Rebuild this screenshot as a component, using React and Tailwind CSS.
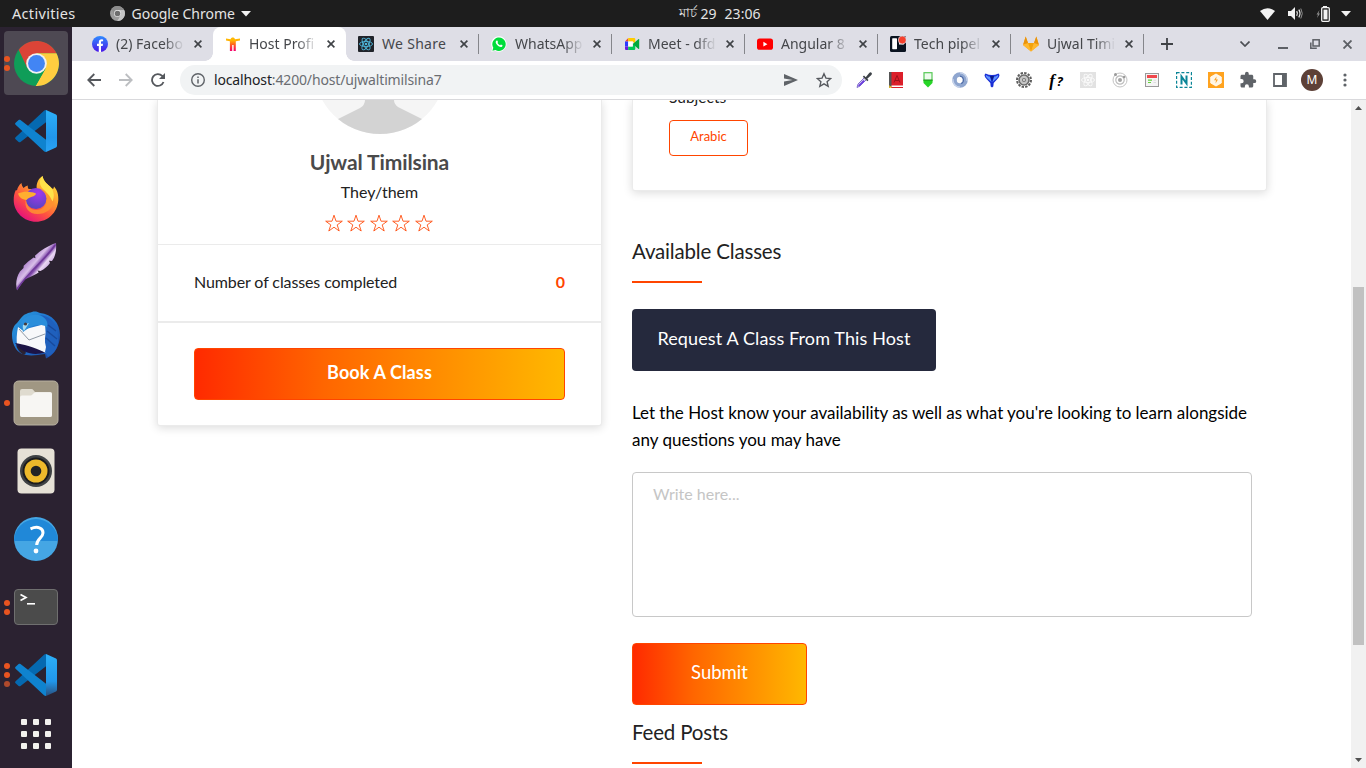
import React from "react";

const UI = "font-['Noto_Sans',sans-serif]";

/* ---------- dock icons ---------- */
function ChromeLogo({ className, mono }) {
  const c = mono
    ? ["#8d8d8d", "#c4c4c4", "#9c9c9c", "#efefef", "#6e6e6e"]
    : ["#db4437", "#ffcd40", "#0f9d58", "#f1f1f1", "#4285f4"];
  return (
    <svg viewBox="0 0 48 48" className={className}>
      <circle cx="24" cy="24" r="24" fill={c[2]} />
      <path d="M24 24 5 9.300A24 24 0 0 1 45.300 13H24z" fill={c[0]} />
      <path d="M24 13H45.300A24 24 0 0 1 23 48L33.500 29.500z" fill={c[1]} />
      <path d="M5 9.300 14.500 29.500 24 13z" fill={c[0]} />
      <path d="M23 48 33.500 29.500 24 24 14 28z" fill={c[2]} />
      <circle cx="24" cy="24" r="11" fill={c[3]} />
      <circle cx="24" cy="24" r="9" fill={c[4]} />
    </svg>
  );
}

function VSCode({ faded }) {
  return (
    <svg viewBox="0 0 42 42" className="h-[42px] w-[42px]">
      <defs>
        <linearGradient id={faded ? "vsb" : "vsa"} x1="0" y1="0" x2="0" y2="1">
          <stop offset="0" stopColor="#2cb0f8" />
          <stop offset="0.65" stopColor="#2196ea" />
          <stop offset="1" stopColor={faded ? "#2a4f7c" : "#2aa3f3"} />
        </linearGradient>
      </defs>
      <path d="M.6 27.2a1.4 1.4 0 0 0 0 2l3 2.7c.6.5 1.3.5 1.9 0L31 12.2V0c-.9 0-1.500.3-2 .8z" fill="#0569b0" />
      <path d="M.6 14.8a1.4 1.4 0 0 1 0-2l3-2.7c.6-.5 1.3-.5 1.9 0L31 29.8V42c-.9 0-1.500-.3-2-.8z" fill="#0f83cf" />
      <path d="M31 0 41 4.600Q42 5.100 42 6.300V35.700Q42 36.900 41 37.400L31 42z" fill={faded ? "url(#vsb)" : "url(#vsa)"} />
    </svg>
  );
}

function Firefox() {
  return (
    <svg viewBox="0 0 46 48" className="h-[48px] w-[46px]">
      <defs>
        <linearGradient id="ff1" x1="0.85" y1="0.1" x2="0.25" y2="0.95">
          <stop offset="0" stopColor="#ffdc3a" />
          <stop offset="0.35" stopColor="#ff9a2e" />
          <stop offset="0.65" stopColor="#ff5340" />
          <stop offset="1" stopColor="#e6127a" />
        </linearGradient>
        <radialGradient id="ff2" cx="0.6" cy="0.25" r="0.75">
          <stop offset="0" stopColor="#a337ee" />
          <stop offset="1" stopColor="#5a44c0" />
        </radialGradient>
      </defs>
      <path d="M8.500 8c.2 2 .8 3.500 2 5 1.200-1.200 2.500-2 4.300-2.600-.2 1.600.1 2.800 1 3.600h8C23 9 25 4 29.500 1c1 5 3.500 7 7.500 10.500 2 1.800 3 3 3.500 2l.5-2C44.500 15 45.500 20 45.300 25 44.500 37.500 35 46.800 23 46.800S.7 37 .7 25c0-4 .6-7 2.200-10L4 15.500C4.500 12.500 6 10 8.500 8z" fill="url(#ff1)" />
      <circle cx="23" cy="23.500" r="10.500" fill="url(#ff2)" />
      <path d="M13 23c0 8 4.500 12 10.500 12 6 0 10.500-4.500 10.500-10.500 0-4-2.500-7.500-6-9.500l4.500.5-3-3c8.500 1.500 12.500 8 11 15.500-1.300 6-7.500 11-16 11S10.500 33 13 23z" fill="#ff9230" fillOpacity="0.850" />
      <path d="M5 18.500c4-1.800 8-2.200 12-1.500 3 .4 6 .8 6 2-1 2-3.500 2.500-6 3.500-1.500.6-2.500 1.500-3.500 2.500C9 24.500 6 22 5 18.500z" fill="#ffae30" />
      <path d="M29.500 1c1 5 3.500 7 7.500 10.500 4 3.500 5 10 2.500 15-2.500-6-6-9-9.500-12.500-4-4-4-9-.5-13z" fill="#ffe34a" />
    </svg>
  );
}

function Feather() {
  return (
    <svg viewBox="0 0 42 48" className="h-[48px] w-[42px]">
      <defs>
        <linearGradient id="fe" x1="0.2" y1="0.2" x2="0.8" y2="0.8">
          <stop offset="0" stopColor="#8245b0" />
          <stop offset="0.4" stopColor="#d9bfe9" />
          <stop offset="0.52" stopColor="#7d46a8" />
          <stop offset="0.62" stopColor="#ead9f3" />
          <stop offset="1" stopColor="#9a5fc4" />
        </linearGradient>
      </defs>
      <path d="M41 0c.6 7-.3 13-4 18l-3-.2 1 2.200c-2.500 3.500-5.500 6-9.500 8l-3-.6 1.200 2c-4 2.600-8.500 4.400-14.500 7.400L2 47.500C.5 42 1 34 5 28.500L8.500 25l.2-2.300C12 19.500 15 17 18.500 14.500l2 .7-.5-2.500C25 8 33 2.500 41 0z" fill="url(#fe)" />
      <path d="M40 2C33 14 15 27 2 46" stroke="#6f3899" strokeWidth="1.500" fill="none" />
    </svg>
  );
}

function Thunderbird() {
  return (
    <svg viewBox="0 0 48 48" className="h-[48px] w-[48px]">
      <defs>
        <linearGradient id="tb" x1="0" y1="0" x2="1" y2="1">
          <stop offset="0" stopColor="#2aa0e0" />
          <stop offset="0.5" stopColor="#1f6fcb" />
          <stop offset="1" stopColor="#1c3f96" />
        </linearGradient>
      </defs>
      <path d="M20 1c3-1 6 0 8 1 12 1 20 10 20 22 0 11-6 20-14 23.500L33 43C20 45 10 46 4 38 1 33 0 29 0 24c0-5 2-10 5-12l4-5C12 3 16 2 20 1z" fill="url(#tb)" />
      <path d="M4 34q8 3 10 8l-2 2Q6 41 4 34z" fill="#2b2231" />
      <path d="M6 16 10 19 33 13 35 42Q20 38 5 34Q4 26 6 16z" fill="#f7f8fa" />
      <path d="M7 18l10 11 16-6" stroke="#8f98a3" strokeWidth="1" fill="none" />
      <path d="M3 32c8 1 18 4 30 9.500-10 3-22 2-30-9.500z" fill="#1c1446" />
      <path d="M9 11c4-6 13-9 20-6 5 2 7 6 6 11-5-3-12-2-17 0l-7 5c-1-3-2-7-2-10z" fill="#2a8edb" />
      <path d="M11 14l6-2-5 8c-1-2-1.500-3-1-6z" fill="#a5daf0" />
      <circle cx="13.500" cy="13" r="1.600" fill="#473a3a" />
      <path d="M28 4c8 4 9 9 7 14-2 6-3 12-1 18l-1 5 3 5c7-4 11-11 10-18l-1-11C42 10 37 5 28 4z" fill="#1f60bd" />
      <path d="M36 14l8 6M35 20l10 8M34 27l9 8" stroke="#184a9c" strokeWidth="1.500" />
    </svg>
  );
}

function Files() {
  return (
    <svg viewBox="0 0 46 46" className="h-[46px] w-[46px]">
      <rect x="1" y="1" width="44" height="44" rx="4.500" fill="#a09783" stroke="#b9b2a2" />
      <path d="M7 11q0-2 2-2h9.500q1.200 0 2 1.200L22 12H37q2 0 2 2v21q0 2-2 2H9q-2 0-2-2z" fill="#dfdbcf" />
      <path d="M7 17.500q0-2 2-2h8.500q1.200 0 2.200-1.200l1.300-1.300q.8-.8 2-.8H37q2 0 2 2V35q0 2-2 2H9q-2 0-2-2z" fill="#f7f6f3" />
    </svg>
  );
}

function Speaker() {
  return (
    <svg viewBox="0 0 38 46" className="h-[46px] w-[38px]">
      <rect x="0.500" y="0.500" width="37" height="45" rx="4" fill="#e6e1d6" />
      <circle cx="19" cy="23" r="16" fill="#3f4244" />
      <circle cx="19" cy="23" r="13.500" fill="#1b1c1e" />
      <circle cx="19" cy="23" r="11.500" fill="#edb92b" />
      <circle cx="19" cy="23" r="5.300" fill="#222325" />
    </svg>
  );
}

function Help() {
  return (
    <svg viewBox="0 0 44 44" className="h-[44px] w-[44px]">
      <circle cx="22" cy="22" r="22" fill="#45a6e4" />
      <path d="M0 24a22 22 0 0 1 44 0z" fill="#2088d8" />
      <path d="M16.500 11.800c7-3 12.700-1 12.500 4.200-.2 5-6.300 5.500-6.300 12" stroke="#fff" strokeWidth="3" fill="none" />
      <circle cx="22" cy="34" r="2.400" fill="#fff" />
    </svg>
  );
}

function Terminal() {
  return (
    <svg viewBox="0 0 44 36" className="h-[36px] w-[44px]">
      <rect x="0.500" y="0.500" width="43" height="35" rx="3.500" fill="#4b4b4b" stroke="#6f6f6f" />
      <path d="M6.500 5.500 12 8.500 6.500 11.500" stroke="#fff" strokeWidth="1.700" fill="none" />
      <path d="M13 14.800h8" stroke="#fff" strokeWidth="1.600" />
    </svg>
  );
}

const dock = [
  { icon: <ChromeLogo className="h-[45px] w-[45px]" />, dots: 2, active: true },
  { icon: <VSCode />, dots: 0 },
  { icon: <Firefox />, dots: 0 },
  { icon: <Feather />, dots: 0 },
  { icon: <Thunderbird />, dots: 0 },
  { icon: <Files />, dots: 1 },
  { icon: <Speaker />, dots: 0 },
  { icon: <Help />, dots: 0 },
  { icon: <Terminal />, dots: 2 },
  { icon: <VSCode faded />, dots: 3 },
];

function Dock() {
  return (
    <aside className="flex w-[72px] shrink-0 flex-col items-center gap-1 overflow-hidden bg-[#2b2231] pt-1">
      {dock.map((d, i) => (
        <div
          key={i}
          className={
            "relative flex h-16 w-16 shrink-0 items-center justify-center rounded-[4px] " +
            (d.active ? "bg-[#4e4953]" : "")
          }
        >
          {d.icon}
          <div className="absolute inset-y-0 left-0 flex flex-col items-center justify-center gap-[3px]">
            {Array.from({ length: d.dots }).map((_, k) => (
              <span key={k} className={"h-[6px] w-[6px] rounded-full " + (k === 2 ? "bg-[#b04a2c]" : "bg-[#e95420]")} />
            ))}
          </div>
        </div>
      ))}
      <div className="mt-2 grid shrink-0 grid-cols-3 gap-[6px]">
        {Array.from({ length: 9 }).map((_, k) => (
          <span key={k} className="h-[6px] w-[6px] rounded-[1px] bg-[#f2f1ee]" />
        ))}
      </div>
    </aside>
  );
}

/* ---------- system bar ---------- */
function TopBar() {
  return (
    <header className={"grid h-[27px] shrink-0 grid-cols-3 items-center bg-[#1d1d1d] text-[14px] leading-none text-[#e4e4e4] " + UI}>
      <div className="flex items-center pl-3">
        <span className="text-[14.500px] tracking-[0.32px]">Activities</span>
        <ChromeLogo mono className="ml-[34px] h-[15px] w-[15px]" />
        <span className="ml-[7px]">Google Chrome</span>
        <svg viewBox="0 0 10 6" className="ml-[6px] h-[6px] w-[10px]"><path d="M0 0h10L5 5.500z" fill="#f2f2f2" /></svg>
      </div>
      <div className="flex items-center justify-center gap-1 pl-[73px]">
        <span className="text-[12.500px]">মার্চ</span>
        <span>29</span>
        <span className="ml-[4px]">23:06</span>
      </div>
      <div className="flex items-center justify-end pr-[15px]">
        <svg viewBox="0 0 15 12" className="h-[12px] w-[15px]"><path d="M0 3Q7.500-2.600 15 3L7.500 12z" fill="#f2f2f2" /></svg>
        <svg viewBox="0 0 15 13" className="ml-[13px] h-[13px] w-[15px]">
          <path d="M0 4h3l4-4v13L3 9H0z" fill="#f2f2f2" />
          <path d="M8.700 4.200q1.500 2.300 0 4.600M10.800 2.700q2.500 3.800 0 7.600" stroke="#f2f2f2" fill="none" strokeWidth="1.200" />
          <path d="M12.800 1.500q3 5 0 10" stroke="#8f8f8f" fill="none" />
        </svg>
        <svg viewBox="0 0 14 16" className="ml-[13px] h-[16px] w-[14px]">
          <path d="M3.500 4 .5 8.500H2L1 12 4 7.500H2.500z" fill="#8e8e8e" />
          <path d="M7 0h4v2H7z" fill="#f2f2f2" />
          <rect x="5.700" y="1.700" width="7.600" height="13.600" rx="1" fill="none" stroke="#f2f2f2" strokeWidth="1.300" />
          <rect x="7.500" y="3.600" width="4" height="9.800" fill="#f2f2f2" />
        </svg>
        <svg viewBox="0 0 10 6" className="ml-[11px] h-[6px] w-[10px]"><path d="M0 0h10L5 5.500z" fill="#f2f2f2" /></svg>
      </div>
    </header>
  );
}

/* ---------- tab favicons ---------- */
const fav = "h-4 w-4 shrink-0";
const Facebook = () => (
  <svg viewBox="0 0 16 16" className={fav}>
    <defs><linearGradient id="fb" x1="0" y1="0" x2="0" y2="1"><stop offset="0" stopColor="#2f8cff" /><stop offset="1" stopColor="#4a16e8" /></linearGradient></defs>
    <circle cx="8" cy="8" r="8" fill="url(#fb)" />
    <path d="M6.800 16V10H5V7.800h1.800V6.300C6.800 4.300 7.900 3.300 9.700 3.300q.8 0 1.400.1v1.900H10c-.8 0-1 .5-1 1.100v1.400h2L10.700 10H9v6z" fill="#fff" />
  </svg>
);
const HostMark = () => (
  <svg viewBox="0 0 16 16" className={fav}>
    <defs><linearGradient id="hm" x1="0" y1="0" x2="0" y2="1"><stop offset="0.2" stopColor="#ffb703" /><stop offset="0.55" stopColor="#ff5a1f" /><stop offset="1" stopColor="#f5006e" /></linearGradient></defs>
    <path d="M1 2.600l4.600.6C6 1 9.500 1 10 3.200l5-.6v2l-4.200.6V15H8.600V9H7.200v6H4.900V5.200L1 4.600z" fill="url(#hm)" />
  </svg>
);
const ReactMark = ({ bg = "#20232a", fg = "#4fb8dc", r = 1 }) => (
  <svg viewBox="0 0 16 16" className={fav}>
    <rect width="16" height="16" rx={r} fill={bg} />
    <g fill="none" stroke={fg} strokeWidth="0.900">
      <ellipse cx="8" cy="8" rx="6.500" ry="2.600" />
      <ellipse cx="8" cy="8" rx="6.500" ry="2.600" transform="rotate(60 8 8)" />
      <ellipse cx="8" cy="8" rx="6.500" ry="2.600" transform="rotate(120 8 8)" />
    </g>
    <circle cx="8" cy="8" r="1.300" fill={fg} />
  </svg>
);
const Whatsapp = () => (
  <svg viewBox="0 0 16 16" className={fav}>
    <path d="M.3 15.800 1.300 12A7.700 7.700 0 1 1 4.100 14.700z" fill="#fff" />
    <path d="M1.400 14.700 2.300 11.700A6.700 6.700 0 1 1 4.500 13.900z" fill="#00dd3b" />
    <path d="M5.800 4.500c.4-.1.600.1.700.4l.5 1.200c.1.300-.5.800-.5 1 .5 1 1.400 1.700 2.400 2.200.3 0 .8-.9 1.100-.8l1.400.7c.3.200.1 1.300-.9 1.700C8.500 11.800 4.800 8.400 4.700 6.300c0-.9.600-1.700 1.100-1.800z" fill="#fff" />
  </svg>
);
const Meet = () => (
  <svg viewBox="0 0 16 16" className={fav}>
    <path d="M1 5.500 4.200 2v3.500z" fill="#ea4335" />
    <path d="M1 5.500h3.200v5H1z" fill="#2a3bff" />
    <path d="M1 10.500h3.200V14H2q-1 0-1-1z" fill="#6a1be0" />
    <path d="M4.200 2H10q1.300 0 1.300 1.300V8L8.800 5.500H4.200z" fill="#ffcc00" />
    <path d="M4.200 10.500h4.600V8l2.500 0v4.700Q11.300 14 10 14H4.200z" fill="#00c853" />
    <path d="M4.200 5.500h4.600v5H4.200z" fill="#fff" />
    <path d="M8.800 8l5.500-4.800q.9-.5.900.4v8.800q0 1-.9.400z" fill="#00a83c" />
  </svg>
);
const Youtube = () => (
  <svg viewBox="0 0 16 16" className={fav}>
    <rect y="2.500" width="16" height="11.300" rx="2.600" fill="#f00" />
    <path d="M6.400 5.800v4.700l4-2.350z" fill="#fff" />
  </svg>
);
const Pipeline = () => (
  <svg viewBox="0 0 16 16" className={fav}>
    <rect width="16" height="16" rx="1.500" fill="#0a1320" />
    <rect x="2.200" y="2.200" width="4.800" height="11" rx="0.600" fill="#fff" />
    <path d="M9 2h5v6.500H9z" fill="#fff" />
    <circle cx="12.300" cy="4" r="4" fill="#f5402c" stroke="#dedee6" strokeWidth="0.700" />
  </svg>
);
const Gitlab = () => (
  <svg viewBox="0 0 16 16" className={fav}>
    <path d="M2.700.5 5 7h6L13.300.5 16 9 8 15.500 0 9z" fill="#fca326" />
    <path d="M5 7h6l-3 8.500z" fill="#f2a30c" />
    <path d="M5 7 0 9l8 6.500zM11 7l5 2-8 6.500z" fill="#ffb92e" />
    <path d="M2.700.5 5 7 .3 8.300zM13.300.5 11 7l4.700 1.300z" fill="#e8930a" />
  </svg>
);

const tabs = [
  { icon: <Facebook />, title: "(2) Facebo" },
  { icon: <HostMark />, title: "Host Profi", active: true },
  { icon: <ReactMark />, title: "We Share", sep: true },
  { icon: <Whatsapp />, title: "WhatsApp", sep: true },
  { icon: <Meet />, title: "Meet - dfd", sep: true },
  { icon: <Youtube />, title: "Angular 8", sep: true },
  { icon: <Pipeline />, title: "Tech pipel", sep: true },
  { icon: <Gitlab />, title: "Ujwal Timi", sep: true },
];

function TabStrip() {
  return (
    <div className={"flex h-[34px] shrink-0 bg-[#dedee6] pl-2 " + UI}>
      {tabs.map((t, i) => (
        <div
          key={i}
          className={
            "relative flex h-[34px] w-[133px] shrink-0 items-center pl-3 " +
            (t.active ? "rounded-t-[8px] bg-white" : "")
          }
        >
          {t.active && (
            <>
              <span className="absolute bottom-0 left-[-8px] h-2 w-2 bg-[radial-gradient(circle_at_0_0,#dedee6_7.5px,#ffffff_8px)]" />
              <span className="absolute right-[-8px] bottom-0 h-2 w-2 bg-[radial-gradient(circle_at_100%_0,#dedee6_7.5px,#ffffff_8px)]" />
            </>
          )}
          {t.icon}
          <span
            className={
              "ml-2 w-[70px] whitespace-nowrap text-[14px] leading-[20px] text-[#45474b] " +
              (t.title === "We Share" ? "tracking-[0.3px]" : "[mask-image:linear-gradient(to_right,black_68%,transparent_98%)]")
            }
          >
            {t.title}
          </span>
          <svg viewBox="0 0 8 8" className="ml-2 h-2 w-2 shrink-0"><path d="M.6.6l6.800 6.800M7.400.6.600 7.400" stroke="#3f4246" strokeWidth="1.600" /></svg>
          {t.sep && <span className="absolute top-[7px] right-0 h-5 w-px bg-[#85868b]" />}
        </div>
      ))}
      <div className="flex flex-1 items-center pl-[17px]">
        <svg viewBox="0 0 12 12" className="h-3 w-3"><path d="M6 0v12M0 6h12" stroke="#3f4246" strokeWidth="1.800" /></svg>
        <svg viewBox="0 0 10 6" className="ml-[67px] h-[6px] w-[10px]"><path d="M.5.500 5 5 9.500.5" stroke="#4c4f54" strokeWidth="1.700" fill="none" /></svg>
        <svg viewBox="0 0 10 10" className="ml-[28px] h-[10px] w-[10px]"><path d="M0 9h10" stroke="#5d6066" strokeWidth="2" /></svg>
        <svg viewBox="0 0 10 10" className="ml-[22px] h-[10px] w-[10px]">
          <rect x="3" y="0.800" width="6.200" height="6.200" fill="none" stroke="#5d6066" strokeWidth="1.500" />
          <path d="M.8 3.500v5.700h6" stroke="#5d6066" strokeWidth="1.500" fill="none" />
        </svg>
        <svg viewBox="0 0 9 9" className="ml-[23px] h-[9px] w-[9px]"><path d="M.5.500l8 8M8.500.5l-8 8" stroke="#5d6066" strokeWidth="1.900" /></svg>
      </div>
    </div>
  );
}

/* ---------- toolbar ---------- */
const ext = [
  <svg viewBox="0 0 16 16" className="h-4 w-4">
    <path d="M1 15.500 2 12 8.500 5.500l2 2L4 14z" fill="#d8d3ea" stroke="#6a50c8" strokeWidth="0.800" />
    <path d="M2 13.500 7.500 8l1.200 1.200L3.500 14.200z" fill="#6a3be0" />
    <path d="M8 3.500 12.500 8l-1.200 1.200L6.800 4.700zM9.700 5.200 13 1.200q1.500-1.600 2.500-.4t-.4 2.500L11.300 6.800z" fill="#3c4147" />
  </svg>,
  <svg viewBox="0 0 16 16" className="h-4 w-4">
    <rect x="1" width="14" height="16" fill="#dc1f2a" /><rect x="1" width="2.500" height="16" fill="#555" />
    <path d="M3.500 13.500H15V15H3.500z" fill="#fff" /><path d="M6 10.500 9 3.500l3 7M7 8.500h4" stroke="#9d121b" fill="none" />
    <path d="M1.500 13 2.500 14.500 4 14.700 3 16H1.200z" fill="#ffd21f" />
  </svg>,
  <svg viewBox="0 0 16 16" className="h-4 w-4">
    <rect x="4" y="0.700" width="8" height="8" fill="#effbef" stroke="#57c957" strokeWidth="1.200" />
    <path d="M3.500 8h9v3L8 15.500 3.500 11z" fill="#27d527" /><path d="M3.500 8h9" stroke="#178a17" />
  </svg>,
  <svg viewBox="0 0 16 16" className="h-4 w-4">
    <circle cx="8" cy="8" r="5.500" fill="none" stroke="#8fa6cf" strokeWidth="4.600" />
    <path d="M8 .8A7.200 7.200 0 0 1 15 9M8 15.200A7.200 7.200 0 0 1 1 7" stroke="#c9d5ec" strokeWidth="1.300" fill="none" />
    <path d="M8 4.200A3.800 3.800 0 0 1 9 11.500" stroke="#4e6ba8" strokeWidth="1.200" fill="none" />
  </svg>,
  <svg viewBox="0 0 16 16" className="h-4 w-4">
    <path d="M1.500 1.500Q8 4.500 14.500 1.500 17 4 13 7.500L9.700 11 9.300 14.500 8 15.500 6.700 14.500 6.300 11 3 7.500Q-1 4 1.500 1.500z" fill="#1a2fd6" />
    <path d="M2 3Q4 4.800 6 4.800L7.500 10 3 6Q1 4 2 3zM14 3q-2 1.800-4 1.800L8.500 10 13 6q2-2 1-3z" fill="#5f94ff" />
    <path d="M6 4h4L8 9z" fill="#0b1a86" />
  </svg>,
  <svg viewBox="0 0 16 16" className="h-4 w-4">
    <circle cx="8" cy="8" r="7" fill="none" stroke="#5c5c5c" strokeWidth="2" strokeDasharray="2.400 1.260" />
    <circle cx="8" cy="8" r="5" fill="#c5c5c5" stroke="#6b6b6b" strokeWidth="1.600" /><circle cx="8" cy="8" r="2" fill="#777" />
    <circle cx="8" cy="8" r="0.900" fill="#eee" />
  </svg>,
  <span className="flex items-baseline gap-[2px] font-['Liberation_Serif',serif] text-[17px] leading-none font-bold text-black"><i>f</i><span className="font-['Noto_Sans',sans-serif] text-[13px] italic">?</span></span>,
  <ReactMark bg="#e2e2e2" fg="#fafafa" r={0} />,
  <svg viewBox="0 0 16 16" className="h-4 w-4">
    <circle cx="8" cy="8" r="7" fill="none" stroke="#c4c4c4" strokeWidth="1" /><circle cx="8" cy="8" r="4.200" fill="none" stroke="#bcbcbc" strokeWidth="1.200" />
    <circle cx="8" cy="8" r="2" fill="#a5a5a5" /><circle cx="3.500" cy="2.500" r="1.500" fill="#9a9a9a" /><circle cx="12.200" cy="5" r="1.300" fill="#9a9a9a" />
  </svg>,
  <svg viewBox="0 0 16 16" className="h-4 w-4">
    <rect x="1.500" y="1.500" width="13" height="13" fill="#f4f4f4" stroke="#9a9a9a" /><rect x="3" y="3" width="10" height="3" fill="#f0484c" />
    <path d="M4 8.200h4M4 10.500h3" stroke="#63d13c" strokeWidth="1.200" /><path d="M9.500 8.200H12M9.500 10.500H12" stroke="#ddd" />
  </svg>,
  <svg viewBox="0 0 16 16" className="h-4 w-4">
    <rect x="0.600" y="0.600" width="14.800" height="14.800" fill="none" stroke="#0a8597" strokeWidth="1.200" strokeDasharray="3 1.800" />
    <path d="M5.500 12.500V4.500l5 7V3.500" stroke="#0a8597" strokeWidth="2" fill="none" />
  </svg>,
  <svg viewBox="0 0 16 16" className="h-4 w-4">
    <rect width="16" height="16" fill="#ffa31f" /><path d="M8 2l5.300 3v6L8 14l-5.300-3V5z" fill="#fff6e6" stroke="#fff" strokeWidth="0.800" />
    <path d="M8.500 4.500 6 8.200h2L7.500 11.500 10 7.500H8.200z" fill="#f8a12a" />
  </svg>,
  <svg viewBox="0 0 24 24" className="h-[18px] w-[18px]">
    <path d="M20.500 11H19V7c0-1.100-.9-2-2-2h-4V3.500a2.500 2.500 0 0 0-5 0V5H4c-1.100 0-2 .9-2 2v3.800h1.500a2.700 2.700 0 0 1 0 5.400H2V20c0 1.100.9 2 2 2h3.800v-1.500a2.700 2.700 0 0 1 5.400 0V22H17c1.100 0 2-.9 2-2v-4h1.500a2.500 2.500 0 0 0 0-5z" fill="#5f6368" />
  </svg>,
  <svg viewBox="0 0 14 14" className="h-[14px] w-[14px]"><path d="M1 1h12v12H1z" fill="#fff" stroke="#5f6368" strokeWidth="1.800" /><path d="M9 1h4v12H9z" fill="#5f6368" /></svg>,
  <span className="flex h-[22px] w-[22px] items-center justify-center rounded-full bg-[#5d4037] text-[12px] leading-none text-white">M</span>,
  <svg viewBox="0 0 4 14" className="ml-[1px] h-[14px] w-[4px]"><g fill="#5f6368"><circle cx="2" cy="2" r="1.600" /><circle cx="2" cy="7" r="1.600" /><circle cx="2" cy="12" r="1.600" /></g></svg>,
];

function Toolbar() {
  return (
    <div className={"flex h-[39px] shrink-0 items-center border-b border-[#d9d9dc] bg-white " + UI}>
      <div className="flex w-[108px] items-center">
        <svg viewBox="0 0 14 14" className="ml-[15px] h-[14px] w-[14px]"><path d="M14 7H1.500M7.300 1 1.300 7l6 6" stroke="#55585d" strokeWidth="1.800" fill="none" /></svg>
        <svg viewBox="0 0 14 14" className="ml-[18px] h-[14px] w-[14px]"><path d="M0 7h12.500M6.700 1l6 6-6 6" stroke="#bcbec1" strokeWidth="1.800" fill="none" /></svg>
        <svg viewBox="0 0 14 14" className="ml-[18px] h-[14px] w-[14px]"><path d="M12.500 9A5.900 5.900 0 1 1 11.200 2.900L12.500 4.500" stroke="#55585d" strokeWidth="1.800" fill="none" /><path d="M14 0v6H8z" fill="#55585d" /></svg>
      </div>
      <div className="flex h-[30px] w-[662px] shrink-0 items-center rounded-full bg-[#f1f3f4] pl-[11px]">
        <svg viewBox="0 0 14 14" className="h-[14px] w-[14px]"><circle cx="7" cy="7" r="6.300" fill="none" stroke="#5f6368" strokeWidth="1.400" /><path d="M7 6.200v4.300M7 3.400V5" stroke="#5f6368" strokeWidth="1.500" /></svg>
        <span className="ml-[9px] text-[14px] leading-none tracking-[-0.150px] text-[#6a6d72]"><span className="text-[#202124]">localhost</span>:4200/host/ujwaltimilsina7</span>
        <svg viewBox="0 0 14 12" className="ml-auto h-3 w-[14px]"><path d="M0 0 14 6 0 12V7.400L8.500 6 0 4.600z" fill="#5f6368" /></svg>
        <svg viewBox="0 0 24 24" className="mr-[10px] ml-[18px] h-4 w-4"><path d="M12 2.500l2.900 6.700 7.200.6-5.500 4.700 1.700 7L12 17.800 5.700 21.500l1.700-7L1.900 9.800l7.200-.6z" fill="none" stroke="#55585d" strokeWidth="2" /></svg>
      </div>
      <div className="ml-[6px] flex">
        {ext.map((e, i) => (
          <span key={i} className="flex h-6 w-8 items-center justify-center">{e}</span>
        ))}
      </div>
    </div>
  );
}

/* ---------- page ---------- */
function Stars() {
  return (
    <div className="mr-[2px] flex gap-[4.500px]">
      {[0, 1, 2, 3, 4].map((i) => (
        <svg key={i} viewBox="0 0 18 18" className="h-[18px] w-[18px]">
          <path d="M9 1.200l2 6h6.300l-5.100 3.700 2 6.100L9 13.200 3.800 17l2-6.100L.7 7.200H7z" fill="none" stroke="#ff4e10" strokeWidth="0.900" />
        </svg>
      ))}
    </div>
  );
}

function ProfileCard() {
  return (
    <section className="flex h-[326px] w-[445px] shrink-0 flex-col rounded-b-[3px] border border-t-0 border-[#ebebeb] bg-white shadow-[0_2px_10px_rgba(0,0,0,0.14)]">
      <div className="flex h-[144px] shrink-0 flex-col items-center">
        <svg viewBox="0 0 132 34" className="h-[34px] w-[132px]">
          <defs><clipPath id="av"><circle cx="66" cy="-32" r="66" /></clipPath></defs>
          <g clipPath="url(#av)">
            <rect width="132" height="34" fill="#f5f5f5" />
            <path d="M51 0q0 5-5 8L22 20v14h88V20L84 7q-4-3-4-7z" fill="#d3d3d3" />
          </g>
        </svg>
        <h1 className="mt-[15px] text-[21px] leading-[25px] font-bold tracking-[-0.100px] text-[#4a4a4a]">Ujwal Timilsina</h1>
        <p className="mt-[8px] text-[16px] leading-[20px] text-[#222]">They/them</p>
        <div className="mt-[12px]"><Stars /></div>
      </div>
      <div className="flex h-[77px] shrink-0 items-center justify-between border-t border-[#ebebeb] px-9 pb-[3px] text-[16px] text-[#222]">
        <span className="tracking-[-0.110px]">Number of classes completed</span>
        <span className="font-bold text-[#ff4500]">0</span>
      </div>
      <div className="flex-1 border-t-2 border-[#ebebeb] px-9 pt-[25px]">
        <button className="flex h-[52px] w-full items-center justify-center rounded-[4px] border border-[#ff4500] bg-[linear-gradient(90deg,#ff2a00_0%,#ff6600_35%,#ffb800_100%)] pb-[4px] text-[18px] font-bold tracking-[0.120px] text-white">
          Book A Class
        </button>
      </div>
    </section>
  );
}

function Heading({ children }) {
  return (
    <h2 className="flex flex-col text-[20.500px] leading-[26px] tracking-[-0.170px] text-[#222]">
      <span>{children}</span>
      <span className="mt-[17px] h-[2px] w-[70px] bg-[#ff4500]" />
    </h2>
  );
}

function Details() {
  return (
    <div className="flex w-[635px] shrink-0 flex-col">
      <section className="h-[91px] shrink-0 rounded-b-[3px] border border-t-0 border-[#ebebeb] bg-white px-9 shadow-[0_2px_10px_rgba(0,0,0,0.14)]">
        <p className="mt-[-13px] text-[15.500px] leading-[20px] text-[#222]">Subjects</p>
        <span className="mt-[13px] flex h-[36px] w-[79px] items-center justify-center rounded-[4px] border border-[#ff4500] pb-[2px] text-[13px] text-[#ff4500]">Arabic</span>
      </section>
      <div className="mt-[47px]"><Heading>Available Classes</Heading></div>
      <button className="mt-[26px] flex h-[62px] w-[304px] shrink-0 items-center justify-center rounded-[4px] bg-[#25293d] pb-[4px] text-[18px] tracking-[0.120px] text-white">Request A Class From This Host</button>
      <p className="mt-[28px] text-[17px] leading-[27px] text-black">
        <span className="whitespace-nowrap tracking-[-0.030px]">Let the Host know your availability as well as what you're looking to learn alongside</span>
        <br />
        <span>any questions you may have</span>
      </p>
      <div className="mt-[19px] h-[145px] w-[620px] shrink-0 rounded-[4px] border border-[#c8c8c8] px-5 pt-[11px] text-[16px] leading-[20px] text-[#c5c5c5]">Write here...</div>
      <button className="mt-[26px] flex h-[62px] w-[175px] shrink-0 items-center justify-center rounded-[4px] border border-[#ff4500] bg-[linear-gradient(90deg,#ff2a00_0%,#ff6600_35%,#ffb800_100%)] pb-[3px] text-[18.500px] text-white">Submit</button>
      <div className="mt-[14px]"><Heading>Feed Posts</Heading></div>
    </div>
  );
}

function Scrollbar() {
  return (
    <div className="flex w-[15px] shrink-0 flex-col items-center bg-[#f1f1f1]">
      <svg viewBox="0 0 7 4" className="mt-[6px] h-[4px] w-[7px]"><path d="M0 4 3.500 0 7 4z" fill="#505050" /></svg>
      <div className="mt-[177px] h-[358px] w-[11px] bg-[#c1c1c1]" />
      <svg viewBox="0 0 7 4" className="mt-auto mb-[6px] h-[4px] w-[7px]"><path d="M0 0 3.500 4 7 0z" fill="#505050" /></svg>
    </div>
  );
}

export default function App() {
  return (
    <div className="flex h-[768px] w-[1366px] flex-col overflow-hidden bg-white">
      <TopBar />
      <div className="flex min-h-0 flex-1">
        <Dock />
        <div className="flex min-w-0 flex-1 flex-col">
          <TabStrip />
          <Toolbar />
          <div className="flex min-h-0 flex-1 overflow-hidden">
            <main className="flex flex-1 gap-[30px] overflow-hidden pl-[85px] font-['Lato',sans-serif]">
              <ProfileCard />
              <Details />
            </main>
            <Scrollbar />
          </div>
        </div>
      </div>
    </div>
  );
}
